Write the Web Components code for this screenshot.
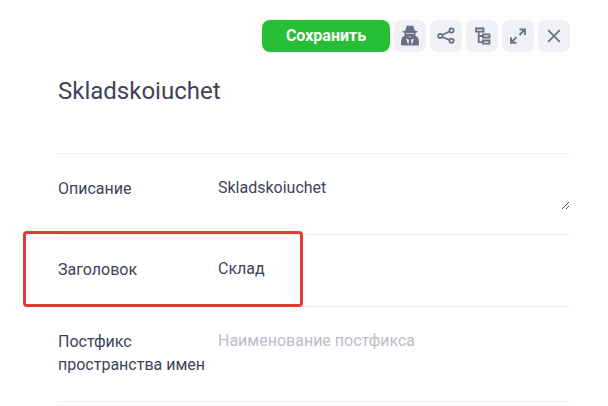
<!DOCTYPE html>
<html lang="ru"><head><meta charset="utf-8"><title>Skladskoiuchet</title>
<style>
body{margin:0;background:#fff;font-family:Roboto,sans-serif;color:#3f425a}
</style></head><body>
<settings-panel></settings-panel>
<script>
const define=(name,html)=>customElements.define(name,class extends HTMLElement{
  constructor(){super();this.attachShadow({mode:'open'}).innerHTML=html;}
});
const icons={
spy:'<path fill="#6b7085" d="M11.300 10.500L12.500 6.500Q13 5.200 14.300 5.600Q16 6.500 17.700 5.600Q19 5.200 19.500 6.500L20.700 10.500L23.500 11.200V12.200L21.500 12.700V15.700L23.500 17Q25 18.500 25 24Q25 25.500 23.500 25.500H8.500Q7 25.500 7 24Q7 18.500 8.500 17L10.500 15.700V12.700L8.500 12.200V11.200z"/><path fill="#f0f0f7" d="M12 13.300H20V14H12zM14.500 16.500H17.500L16 17.500zM12 18.500L15 19.700L14.300 25zM20 18.500L17 19.700L17.700 25z"/>',
share:'<path d="M12.200 15L19.400 11.500M12.200 17L19.400 19.800"/><circle cx="10.300" cy="16" r="2.100"/><circle cx="21.500" cy="10.600" r="2.100"/><circle cx="21.500" cy="20.800" r="2.100"/>',
tree:'<path d="M10 8.500H17.500V11.700H10zM12.700 12V22.200H17M12.700 16H17M17 14.300H23.500V17.500H17zM17 20.500H23.500V23.700H17z"/>',
expand:'<path stroke-width="1.900" d="M17.500 9.500H23V15M23 9.500L17.500 15M14.500 22.700H9V17.200M9 22.700L14.500 17.200"/>',
close:'<path d="M10.200 10.200L21.800 21.800M21.800 10.200L10.200 21.800"/>'};
define('save-button',`<style>:host{display:block;width:128px}button{display:block;width:100%;height:32px;padding:0;border:0;border-radius:8px;background:#27bf36;color:#fff;font:700 16px/32px Roboto,sans-serif}</style><button><slot></slot></button>`);
customElements.define('icon-button',class extends HTMLElement{
 constructor(){super();this.attachShadow({mode:'open'});}
 connectedCallback(){const line=this.getAttribute('name')==='spy'?'':'fill="none" stroke="#6b7085" stroke-width="1.800"';
 this.shadowRoot.innerHTML=`<style>:host{display:flex;width:32px;height:32px;border-radius:8px;background:#f0f0f7}svg{width:32px;height:32px}</style><svg viewBox="0 0 32 32" ${line}>${icons[this.getAttribute('name')]}</svg>`;}
});
define('field-row',`<style>:host{display:grid;grid-template-columns:160px 1fr;box-sizing:border-box;border-top:1px solid #ececf0;font-size:16px;line-height:23px}.v{margin-top:-1px}:host([empty]) .v{color:#bcbcc8}</style><slot name="label"></slot><div class="v"><slot></slot></div>`);
define('resize-grip',`<style>:host{display:block;position:absolute;right:0;bottom:25px;width:8px;height:8px}svg{display:block}</style><svg width="8" height="8" shape-rendering="crispEdges" fill="#555"><path d="M0 7h1v1h-1zM1 6h1v1h-1zM2 5h1v1h-1zM3 4h1v1h-1zM4 3h1v1h-1zM5 2h1v1h-1zM6 1h1v1h-1zM4 7h1v1h-1zM5 6h1v1h-1zM6 5h1v1h-1z"/></svg>`);
define('highlight-frame',`<style>:host{display:block;position:absolute;left:23px;top:231px;width:280px;height:76px;box-sizing:border-box;border:3px solid #e63b32;border-radius:4px}</style>`);
define('settings-panel',`<style>:host{display:block;width:512px;padding:20px 38px 0 58px;position:relative}nav{display:flex;justify-content:flex-end;gap:4px}h1{margin:24px 0 0;height:77px;font-size:24px;font-weight:400;line-height:30px}field-row{padding-top:23px;position:relative}.end{border-top:1px solid #ececf0}</style>
<nav><save-button>Сохранить</save-button><icon-button name="spy"></icon-button><icon-button name="share"></icon-button><icon-button name="tree"></icon-button><icon-button name="expand"></icon-button><icon-button name="close"></icon-button></nav><h1>Skladskoiuchet</h1>
<field-row style="height:81px"><span slot="label">Описание</span>Skladskoiuchet<resize-grip></resize-grip></field-row>
<field-row style="height:72px"><span slot="label">Заголовок</span>Склад</field-row>
<field-row empty style="height:95px"><span slot="label">Постфикс пространства имен</span>Наименование постфикса</field-row><div class="end"></div><highlight-frame></highlight-frame>`);
</script></body></html>
